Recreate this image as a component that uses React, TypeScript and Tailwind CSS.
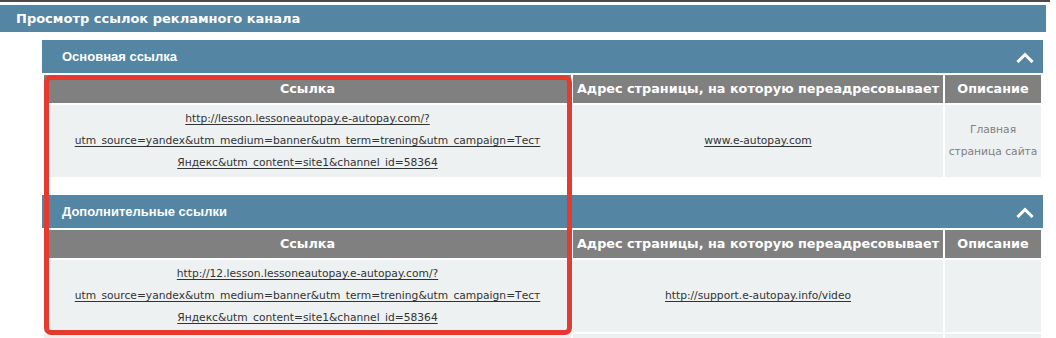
import React from "react";

type Row = {
  link: string[];
  target: string;
  description?: string[];
};

const verdana = "font-['Verdana','DejaVu_Sans',sans-serif]";
const tahoma = "font-['Tahoma','Liberation_Sans',sans-serif]";

const ChevronUp = () => (
  <svg width="18" height="12" viewBox="0 0 18 12" fill="none">
    <polyline
      points="2.5,10 9,3.5 15.5,10"
      stroke="white"
      strokeWidth="3"
      strokeLinecap="square"
      strokeLinejoin="miter"
    />
  </svg>
);

const LinksTable: React.FC<{ rows: Row[]; extraRow?: boolean }> = ({
  rows,
  extraRow,
}) => {
  return (
    <table className="w-[1001px] border-separate border-spacing-[2px] table-fixed">
      <colgroup>
        <col className="w-[527px]" />
        <col className="w-[370px]" />
        <col className="w-[96px]" />
      </colgroup>
      <thead>
        <tr className="h-[28px]">
          <th className="bg-[#808080] text-white text-[12.8px] font-bold p-0 text-center">
            Ссылка
          </th>
          <th className="bg-[#808080] text-white text-[12.8px] font-bold p-0 text-center whitespace-nowrap">
            Адрес страницы, на которую переадресовывает
          </th>
          <th className="bg-[#808080] text-white text-[12.8px] font-bold p-0 text-center">
            Описание
          </th>
        </tr>
      </thead>
      <tbody>
        {rows.map((r, i) => (
          <tr key={i} className="h-[72px]">
            <td className="bg-[#eef1f2] text-center align-middle text-[10.7px] leading-[22px] text-[#333]">
              <a href="#" className="underline decoration-[#333] underline-offset-2">
                {r.link.map((l, j) => (
                  <React.Fragment key={j}>
                    {l}
                    {j < r.link.length - 1 && <br />}
                  </React.Fragment>
                ))}
              </a>
            </td>
            <td className="bg-[#eef1f2] text-center align-middle text-[10.7px] leading-[22px] text-[#333]">
              <a href="#" className="underline decoration-[#333] underline-offset-2">
                {r.target}
              </a>
            </td>
            <td className="bg-[#eef1f2] text-center align-middle text-[10.7px] leading-[22px] text-[#808080]">
              {r.description?.map((d, j) => (
                <div key={j}>{d}</div>
              ))}
            </td>
          </tr>
        ))}
        {extraRow && (
          <tr className="h-[72px]">
            <td className="bg-[#eef1f2]" />
            <td className="bg-[#eef1f2]" />
            <td className="bg-[#eef1f2]" />
          </tr>
        )}
      </tbody>
    </table>
  );
};

const Section: React.FC<{ title: string; children: React.ReactNode }> = ({
  title,
  children,
}) => (
  <div className="w-[1001px]">
    <div className="h-[33px] bg-[#5485a2] flex items-center justify-between pl-5 pr-[9px]">
      <span className={`${tahoma} text-white text-[13px] font-bold`}>{title}</span>
      <ChevronUp />
    </div>
    {children}
  </div>
);

export default function App() {
  const mainRows: Row[] = [
    {
      link: [
        "http://lesson.lessoneautopay.e-autopay.com/?",
        "utm_source=yandex&utm_medium=banner&utm_term=trening&utm_campaign=Тест",
        "Яндекс&utm_content=site1&channel_id=58364",
      ],
      target: "www.e-autopay.com",
      description: ["Главная", "страница сайта"],
    },
  ];

  const extraRows: Row[] = [
    {
      link: [
        "http://12.lesson.lessoneautopay.e-autopay.com/?",
        "utm_source=yandex&utm_medium=banner&utm_term=trening&utm_campaign=Тест",
        "Яндекс&utm_content=site1&channel_id=58364",
      ],
      target: "http://support.e-autopay.info/video",
    },
  ];

  return (
    <div className={`${verdana} relative w-[1056px] h-[338px] overflow-hidden bg-white`}>
      <div className="h-[2px] w-[1050px] bg-[#4a4a4a]" />
      <div className="h-[3px]" />
      <div className="h-[27px] w-[1046px] bg-[#5485a2] flex items-center pl-4">
        <span className="text-white text-[13px] font-bold">
          Просмотр ссылок рекламного канала
        </span>
      </div>

      <div className="pl-[42px] pt-[8px] flex flex-col gap-[16px]">
        <Section title="Основная ссылка">
          <LinksTable rows={mainRows} />
        </Section>
        <Section title="Дополнительные ссылки">
          <LinksTable rows={extraRows} extraRow />
        </Section>
      </div>

      {/* red highlight over the link column */}
      <div className="absolute left-[44px] top-[75px] w-[528px] h-[260px] border-[5px] border-[#e53a30] rounded-[7px] pointer-events-none" />
    </div>
  );
}
